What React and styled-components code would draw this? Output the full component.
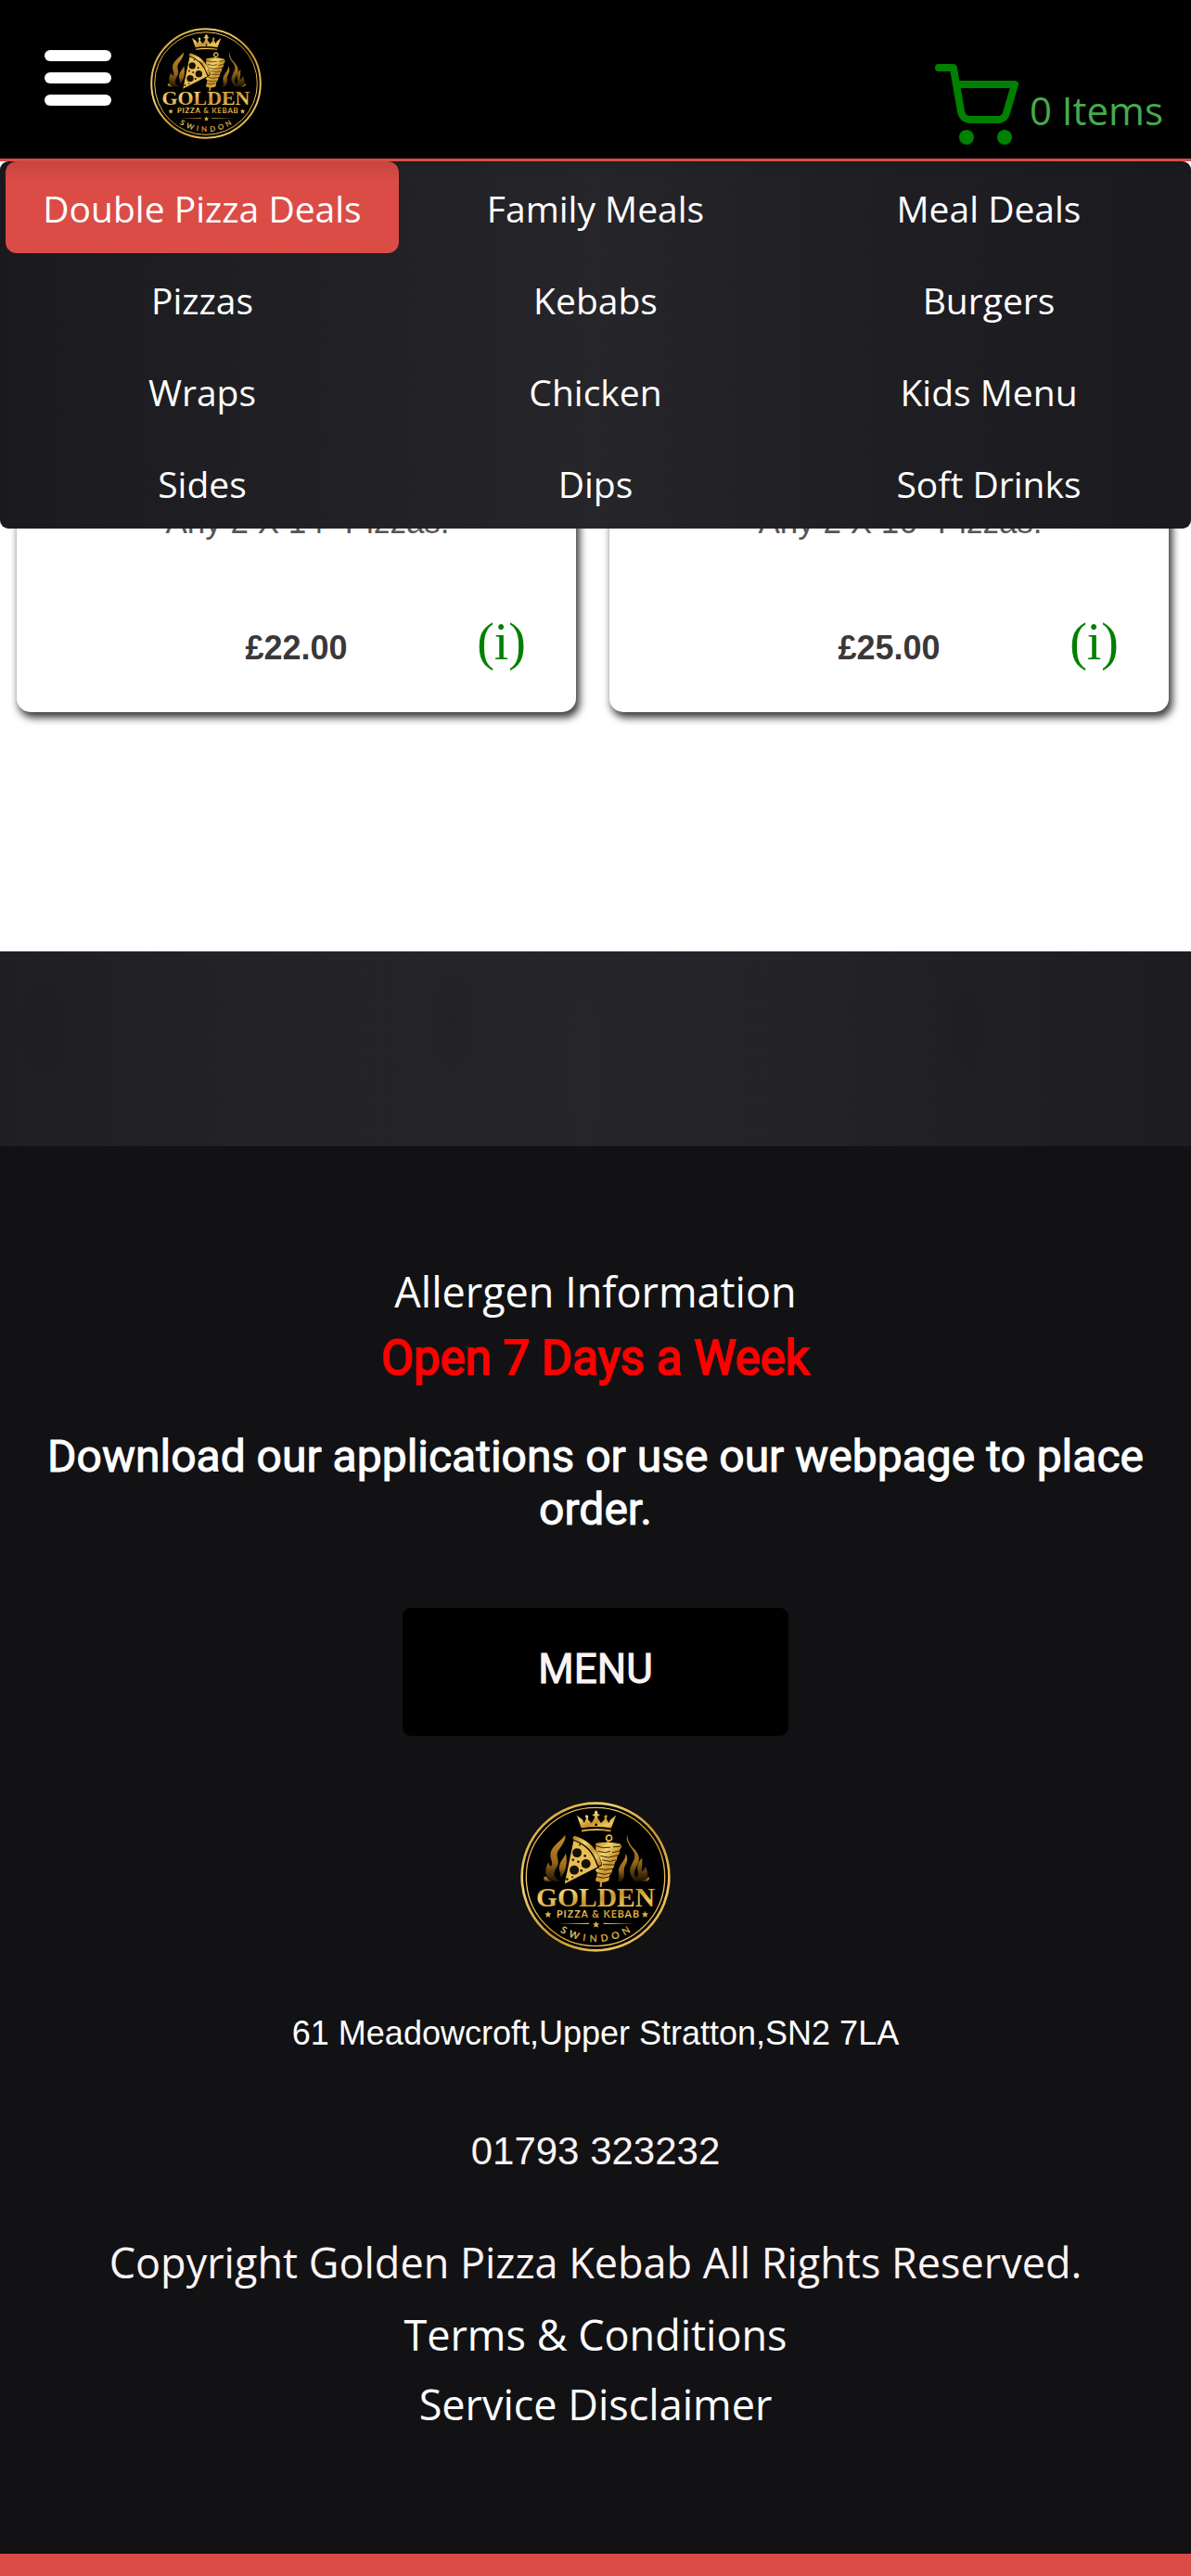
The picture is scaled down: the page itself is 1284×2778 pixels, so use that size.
import { useId } from 'react';
import styled, { createGlobalStyle } from 'styled-components';

const GlobalStyle = createGlobalStyle`
  :root {
    --red: #db4c46;
    --green: #008000;
    --lightGreen: #46aa4d;
    --offWhite: #fbf3f4;
    --footerBlack: #121214;
    --openSans: 'Open Sans', sans-serif;
    --roboto: Roboto, sans-serif;
    --arial: 'Liberation Sans', Arial, sans-serif;
    --times: 'Liberation Serif', 'Times New Roman', serif;
  }

  * {
    box-sizing: border-box;
  }

  body {
    margin: 0;
    background-color: #fff;
    font-family: var(--openSans);
  }

  a {
    color: inherit;
    text-decoration: none;
  }

  h2, p, ul {
    margin: 0;
    padding: 0;
  }
`;

const StyledHeader = styled.header`
  position: relative;
  z-index: 2;
  display: flex;
  align-items: flex-start;
  gap: 42px;
  padding: 30px 30px 15px 48px;
  background-color: #000;
  border-bottom: 3px solid var(--red);
`;

const MenuToggle = styled.button`
  display: grid;
  gap: 12px;
  width: 72px;
  padding: 24px 0 0;
  background: none;
  border: 0;
  cursor: pointer;

  span {
    height: 12px;
    border-radius: 6px;
    background-color: #fff;
  }
`;

const CartLink = styled.a`
  display: flex;
  align-items: flex-end;
  gap: 11px;
  margin-left: auto;
  height: 126px;
  color: var(--lightGreen);
  font-size: 42px;
  line-height: 60px;

  svg {
    color: var(--green);
  }

  span {
    padding-bottom: 7px;
  }
`;

const CategoryNav = styled.nav`
  position: absolute;
  z-index: 1;
  top: 100%;
  left: 0;
  right: 0;
  margin-top: 3px;
  border-radius: 9px;
  overflow: hidden;
  background: linear-gradient(
    90deg,
    #1b1a1f 0%,
    #1e1e22 14%,
    #222125 32%,
    #26252a 50%,
    #232227 60%,
    #1f1e22 74%,
    #1b1a1f 100%
  );
  box-shadow: inset 0 9px 12px -3px rgba(0, 0, 0, 0.1);

  ul {
    display: grid;
    grid-template-columns: repeat(3, 1fr);
    padding: 0 6px;
    list-style: none;
  }
`;

const CategoryLink = styled.a`
  display: block;
  padding-top: 2px;
  border-radius: 12px;
  background: ${({ $active }) =>
    $active
      ? 'linear-gradient(rgba(0, 0, 0, 0.09), transparent 24px) var(--red)'
      : 'none'};
  color: #fff;
  font-size: 39px;
  line-height: 97px;
  text-align: center;
`;

const Deals = styled.main`
  display: grid;
  grid-template-columns: repeat(2, 1fr);
  gap: 36px;
  padding: 18px 24px 258px 18px;
`;

const DealCard = styled.article`
  display: flex;
  flex-direction: column;
  justify-content: flex-end;
  gap: 78px;
  min-height: 576px;
  padding-bottom: 46px;
  border-radius: 15px;
  background-color: #fff;
  box-shadow: 3px 5px 9px 1px #3f3a3b;
  font-family: var(--arial);
  font-size: 36px;
  line-height: 42px;
`;

const Description = styled.p`
  padding-left: 24px;
  color: #555;
  font-size: 35px;
  text-align: center;
`;

const PriceRow = styled.div`
  display: grid;
  grid-template-columns: 1fr auto 1fr;
  align-items: baseline;
  padding: 0 54px;
`;

const Price = styled.strong`
  grid-column: 2;
  color: #3a3839;
`;

const InfoButton = styled.button`
  justify-self: end;
  padding: 0;
  background: none;
  border: 0;
  color: var(--green);
  font-family: var(--times);
  font-size: 56px;
  line-height: 60px;
  cursor: pointer;
`;

const WoodBand = styled.div`
  height: 210px;
  background:
    radial-gradient(ellipse 30px 90px at 81% 40%, rgba(0, 0, 0, 0.08), transparent),
    radial-gradient(ellipse 30px 70px at 38% 36%, rgba(0, 0, 0, 0.06), transparent),
    radial-gradient(ellipse 40px 70px at 4% 40%, rgba(0, 0, 0, 0.06), transparent),
    radial-gradient(ellipse 30px 120px at 49% 60%, rgba(255, 255, 255, 0.01), transparent),
    linear-gradient(
      90deg,
      #1f1f23 0%,
      #222226 14%,
      #242428 28%,
      #252429 50%,
      #242328 66%,
      #212024 78%,
      #1d1c20 100%
    );
`;

const StyledFooter = styled.footer`
  display: flex;
  flex-direction: column;
  align-items: center;
  padding: 127px 30px 131px;
  border-bottom: 24px solid var(--red);
  background-color: var(--footerBlack);
  color: #fff;
  text-align: center;
`;

const FooterLink = styled.a`
  margin-top: ${({ $top }) => $top || 0}px;
  font-size: 45px;
  line-height: 60px;
`;

const OpeningHours = styled.h2`
  margin-top: 12px;
  color: #f00;
  font-family: var(--roboto);
  font-size: 51px;
  font-weight: 400;
  line-height: 60px;
  -webkit-text-stroke: 2px currentColor;
`;

const Download = styled.p`
  margin-top: 47px;
  font-family: var(--roboto);
  font-size: 48px;
  font-weight: 400;
  line-height: 57px;
  -webkit-text-stroke: 1px currentColor;
`;

const MenuButton = styled.button`
  width: 416px;
  height: 138px;
  margin: 78px 0 71px;
  padding: 0 0 6px;
  border: 0;
  border-radius: 9px;
  background-color: #000;
  color: var(--offWhite);
  font-family: var(--roboto);
  font-size: 44px;
  font-weight: 400;
  -webkit-text-stroke: 1px currentColor;
  cursor: pointer;
`;

const Address = styled.p`
  margin-top: 67px;
  font-family: var(--arial);
  font-size: 36px;
  line-height: 42px;
`;

const Phone = styled.a`
  margin-top: 82px;
  color: var(--offWhite);
  font-family: var(--arial);
  font-size: 42px;
  line-height: 48px;
`;

const Copyright = styled.p`
  margin-top: 66px;
  color: var(--offWhite);
  font-size: 45px;
  line-height: 60px;
`;

const STAR =
  'M0 -11L3 -4L11 -3L5 2L7 10L0 6L-7 10L-5 2L-11 -3L-3 -4Z';

const Logo = ({ size }) => {
  const id = useId();
  const gold = `url(#${id}gold)`;
  const flame = `url(#${id}flame)`;

  return (
    <svg
      width={size}
      height={size}
      viewBox='60 68 488 488'
      role='img'
      aria-label='Golden Pizza & Kebab Swindon'
    >
      <defs>
        <linearGradient id={`${id}gold`} x1='0' y1='0' x2='1' y2='1'>
          <stop offset='0' stopColor='#c08a24' />
          <stop offset='0.3' stopColor='#f3d470' />
          <stop offset='0.55' stopColor='#c9932c' />
          <stop offset='0.8' stopColor='#edc75c' />
          <stop offset='1' stopColor='#b98425' />
        </linearGradient>
        <linearGradient id={`${id}flame`} x1='0' y1='0' x2='0' y2='1'>
          <stop offset='0' stopColor='#c08c2c' />
          <stop offset='0.6' stopColor='#94651a' />
          <stop offset='1' stopColor='#1c1203' />
        </linearGradient>
        <path id={`${id}arc`} d='M92 312A212 212 0 0 0 516 312' />
      </defs>
      <circle cx='304' cy='312' r='243' fill='#000' />
      <circle cx='304' cy='312' r='239' fill='none' stroke={gold} strokeWidth='8' />
      <circle cx='304' cy='312' r='225' fill='none' stroke={gold} strokeWidth='4' />

      {/* crown */}
      <path
        fill={gold}
        d='M243 112L262 127L267 137L274 123L270 114L276 110L281 116L279 125L291 137L300 123L302 116L293 111L301 107L301 101L306 96L311 101L311 107L319 111L310 116L312 123L322 137L334 125L332 116L338 110L343 115L339 123L347 137L352 127L371 112L355 154Q306 145 258 154Z'
      />
      <path fill='none' stroke={gold} strokeWidth='6' d='M259 163Q306 154 354 163' />
      <circle cx='306' cy='143' r='4' fill='#000' />

      {/* flames */}
      <g fill={flame}>
        <path d='M206 175C198 190 171 205 160 228C153 248 164 259 163 272C160 284 151 272 151 264C143 280 139 296 146 310C151 324 171 328 192 328C171 318 164 305 174 288C189 268 181 255 179 241C179 220 209 206 206 175Z' />
        <path d='M207 235C205 248 190 258 187 275C183 290 193 300 190 318C205 300 216 268 207 235Z' />
        <path d='M145 312C134 309 133 320 143 328H166C154 324 148 319 145 312Z' />
        <path d='M407 175C401 198 417 212 427 229C437 246 428 258 421 273C411 291 415 305 430 326H466C476 312 475 292 465 279C464 288 460 294 453 294C456 283 455 262 456 250C444 260 438 276 441 291C446 304 441 311 436 314C425 300 432 288 441 271C451 251 443 237 430 222C419 210 409 200 407 175Z' />
        <path d='M402 236C411 252 407 264 400 276C391 292 404 304 390 327H373C386 316 378 304 379 290C382 268 403 260 402 236Z' />
        <path d='M475 312C482 316 479 323 470 328H450C464 325 472 320 475 312Z' />
      </g>

      {/* kebab */}
      <circle cx='348' cy='186' r='9' fill='none' stroke={gold} strokeWidth='5' />
      <path stroke='#d9a43a' strokeWidth='6' d='M345 194L344 202M322 325L321 345' />
      <path
        fill={gold}
        d='M305 203Q345 195 385 205L389 215L383 224L381 237L375 244L373 257L367 265L364 279L359 286L356 300L350 306L347 324Q325 336 304 325L310 300L304 290Z'
      />
      <path
        fill='none'
        stroke='#352206'
        strokeWidth='3'
        d='M305 211Q330 222 352 216M361 215L386 213M312 229L335 233L352 229M358 233L382 228M320 244L345 249L377 242M326 257L351 262L371 257M328 272L366 273M314 285L334 289L361 286M309 299L334 304L355 299M307 311L330 316L350 311'
      />

      {/* slice */}
      <path
        fill='#e9bd55'
        stroke='#000'
        strokeWidth='4'
        d='M232 189L201 338L314 281Q295 215 232 189Z'
      />
      <path
        fill='none'
        stroke='#000'
        strokeWidth='18'
        strokeLinecap='round'
        d='M237 187Q296 207 316 270'
      />
      <path
        fill='none'
        stroke={gold}
        strokeWidth='13'
        strokeLinecap='round'
        d='M237 186Q297 205 317 269'
      />
      <g fill='#171004'>
        <circle cx='244' cy='234' r='15' />
        <circle cx='273' cy='270' r='15' />
        <circle cx='235' cy='290' r='15' />
        <circle cx='231' cy='257' r='4' />
        <circle cx='248' cy='263' r='4' />
        <circle cx='270' cy='244' r='4' />
        <circle cx='258' cy='292' r='4' />
        <circle cx='212' cy='320' r='4' />
        <circle cx='229' cy='313' r='3' />
        <circle cx='253' cy='208' r='3' />
      </g>

      <g fill={gold} textAnchor='middle'>
        <text
          x='304'
          y='407'
          fontFamily="'Liberation Serif', serif"
          fontSize='89'
          fontWeight='700'
          stroke='#000'
          strokeWidth='6'
          paintOrder='stroke'
        >
          GOLDEN
        </text>
        <text
          x='313'
          y='444'
          fontFamily='Lato, sans-serif'
          fontSize='32'
          fontWeight='700'
          letterSpacing='3'
        >
          PIZZA &amp; KEBAB
        </text>
        <text
          fontFamily='Lato, sans-serif'
          fontSize='32'
          fontWeight='700'
          letterSpacing='14'
        >
          <textPath href={`#${id}arc`} startOffset='51%'>
            SWINDON
          </textPath>
        </text>
      </g>
      <g fill='#e0b04a'>
        <path d={STAR} transform='translate(150 434)' />
        <path d={STAR} transform='translate(465 434)' />
        <path d={STAR} transform='translate(306 467)' />
        <path d='M182 465L283 462V466ZM433 465L330 462V466Z' />
      </g>
    </svg>
  );
};

const CartIcon = () => (
  <svg width='91' height='90' viewBox='0 0 91 90' aria-hidden='true'>
    <path
      d='M4 7H19Q20 7 20 8L28 54Q30 63 38 63H68Q75 63 77 56L86 25Q86 25 85 25H24'
      fill='none'
      stroke='currentColor'
      strokeWidth='8'
      strokeLinecap='round'
      strokeLinejoin='round'
    />
    <circle cx='34' cy='82' r='8' fill='currentColor' />
    <circle cx='75' cy='82' r='8' fill='currentColor' />
  </svg>
);

const categories = [
  'Double Pizza Deals',
  'Family Meals',
  'Meal Deals',
  'Pizzas',
  'Kebabs',
  'Burgers',
  'Wraps',
  'Chicken',
  'Kids Menu',
  'Sides',
  'Dips',
  'Soft Drinks',
];

const deals = [
  { id: 1, description: 'Any 2 X 14" Pizzas.', price: '£22.00' },
  { id: 2, description: 'Any 2 X 16" Pizzas.', price: '£25.00' },
];

const Header = () => (
  <StyledHeader>
    <MenuToggle type='button' aria-label='Open menu'>
      <span />
      <span />
      <span />
    </MenuToggle>
    <Logo size={120} />
    <CartLink href='#cart'>
      <CartIcon />
      <span>0 Items</span>
    </CartLink>
    <CategoryNav>
      <ul>
        {categories.map((category, index) => (
          <li key={category}>
            <CategoryLink href='#deals' $active={index === 0}>
              {category}
            </CategoryLink>
          </li>
        ))}
      </ul>
    </CategoryNav>
  </StyledHeader>
);

const Footer = () => (
  <StyledFooter>
    <FooterLink href='#allergens'>Allergen Information</FooterLink>
    <OpeningHours>Open 7 Days a Week</OpeningHours>
    <Download>
      Download our applications or use our webpage to place order.
    </Download>
    <MenuButton type='button'>MENU</MenuButton>
    <Logo size={162} />
    <Address>61 Meadowcroft,Upper Stratton,SN2 7LA</Address>
    <Phone href='tel:01793323232'>01793 323232</Phone>
    <Copyright>Copyright Golden Pizza Kebab All Rights Reserved.</Copyright>
    <FooterLink href='#terms' $top={18}>
      Terms &amp; Conditions
    </FooterLink>
    <FooterLink href='#disclaimer' $top={15}>
      Service Disclaimer
    </FooterLink>
  </StyledFooter>
);

const App = () => (
  <>
    <GlobalStyle />
    <Header />
    <Deals id='deals'>
      {deals.map(({ id, description, price }) => (
        <DealCard key={id}>
          <Description>{description}</Description>
          <PriceRow>
            <Price>{price}</Price>
            <InfoButton type='button'>(i)</InfoButton>
          </PriceRow>
        </DealCard>
      ))}
    </Deals>
    <WoodBand />
    <Footer />
  </>
);

export default App;
